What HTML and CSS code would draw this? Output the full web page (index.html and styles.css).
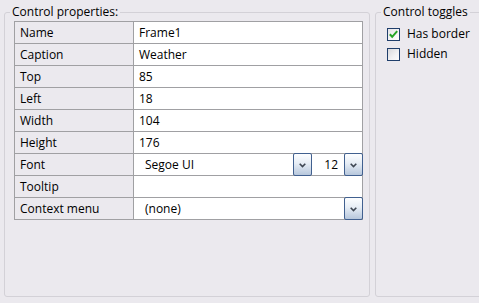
FILE: index.html
```html
<!DOCTYPE html>
<html>
<head>
<meta charset="utf-8">
<link rel="stylesheet" href="styles.css">
</head>
<body>
<div class="page">
  <fieldset class="group props">
    <legend>Control properties:</legend>
    <div class="inner props-inner">
      <div class="grid">
        <div class="row"><div class="key">Name</div><div class="val">Frame1</div></div>
        <div class="row"><div class="key">Caption</div><div class="val">Weather</div></div>
        <div class="row"><div class="key">Top</div><div class="val">85</div></div>
        <div class="row"><div class="key">Left</div><div class="val">18</div></div>
        <div class="row"><div class="key">Width</div><div class="val">104</div></div>
        <div class="row"><div class="key">Height</div><div class="val">176</div></div>
        <div class="row">
          <div class="key">Font</div>
          <div class="val combo-cell">
            <div class="combo grow"><span class="combo-text">Segoe UI</span><span class="drop"><svg width="7" height="5" viewBox="0 0 7 5"><path d="M0.7 0.7 L3.5 3.5 L6.3 0.7" fill="none" stroke="#3e4652" stroke-width="1.6"/></svg></span></div>
            <div class="combo size"><span class="combo-text right">12</span><span class="drop last"><svg width="7" height="5" viewBox="0 0 7 5"><path d="M0.7 0.7 L3.5 3.5 L6.3 0.7" fill="none" stroke="#3e4652" stroke-width="1.6"/></svg></span></div>
          </div>
        </div>
        <div class="row"><div class="key">Tooltip</div><div class="val"></div></div>
        <div class="row">
          <div class="key">Context menu</div>
          <div class="val combo-cell">
            <div class="combo grow"><span class="combo-text">(none)</span><span class="drop last"><svg width="7" height="5" viewBox="0 0 7 5"><path d="M0.7 0.7 L3.5 3.5 L6.3 0.7" fill="none" stroke="#3e4652" stroke-width="1.6"/></svg></span></div>
          </div>
        </div>
      </div>
    </div>
  </fieldset>
  <fieldset class="group toggles">
    <legend>Control toggles</legend>
    <div class="inner toggles-inner">
      <label class="check-row"><span class="box checked"><svg width="11" height="11" viewBox="0 0 11 11"><path d="M1.8 5.2 L4.2 7.8 L9.2 2.2" fill="none" stroke="#26a526" stroke-width="2"/></svg></span><span>Has border</span></label>
      <label class="check-row"><span class="box"></span><span>Hidden</span></label>
    </div>
  </fieldset>
</div>
</body>
</html>
```

FILE: styles.css
```css
html, body {
  margin: 0;
  padding: 0;
  background: #ebe9ee;
}

body {
  font-family: "Open Sans", "Noto Sans", sans-serif;
  font-size: 12px;
  color: #000;
  overflow: hidden;
}

.page {
  display: flex;
  gap: 5px;
  padding: 4px 0 0 4px;
  width: 479px;
  height: 303px;
  box-sizing: border-box;
  overflow: hidden;
}

.group {
  margin: 0;
  padding: 0;
  min-width: 0;
  border: 1px solid #d3d1d7;
  border-radius: 3px;
  box-sizing: border-box;
  height: 293px;
  flex: none;
}

.group legend {
  margin-left: 5px;
  padding: 0 2px;
  line-height: 16px;
  height: 16px;
}

.props {
  width: 366px;
}

.toggles {
  width: 130px;
}

.props-inner {
  padding: 1px 6px 0 9px;
}

.grid {
  width: 349px;
  box-sizing: border-box;
  border: 1px solid #a0a0a3;
  display: flex;
  flex-direction: column;
}

.row {
  display: flex;
  height: 22px;
  box-sizing: border-box;
  border-bottom: 1px solid #a0a0a3;
}

.row:last-child {
  border-bottom: none;
  height: 21px;
}

.key {
  width: 119px;
  flex: none;
  box-sizing: border-box;
  border-right: 1px solid #a0a0a3;
  padding-left: 5px;
  line-height: 21px;
}

.val {
  flex: 1;
  background: #fff;
  padding-left: 5px;
  line-height: 21px;
}

.combo-cell {
  padding-left: 0;
  display: flex;
}

.combo {
  display: flex;
  position: relative;
}

.combo.grow {
  flex: 1;
}

.combo.size {
  width: 50px;
  flex: none;
}

.combo-text {
  flex: 1;
  padding-left: 11px;
}

.combo-text.right {
  text-align: right;
  padding-left: 0;
  padding-right: 6px;
}

.drop {
  width: 19px;
  height: 23px;
  margin: -1px 0;
  box-sizing: border-box;
  border: 1px solid #41608f;
  border-radius: 2px;
  background: linear-gradient(#fdfeff 0%, #e6edf5 45%, #b7c7dc 100%);
  display: flex;
  align-items: center;
  justify-content: center;
  position: relative;
}

.drop.last {
  margin-right: -1px;
}

.drop svg {
  display: block;
  margin-top: 1px;
}

.toggles-inner {
  padding: 4px 0 0 11px;
  display: flex;
  flex-direction: column;
}

.check-row {
  display: flex;
  align-items: center;
  height: 20px;
  gap: 7px;
  line-height: 20px;
}

.box {
  width: 13px;
  height: 13px;
  box-sizing: border-box;
  border: 1px solid #1f3e6b;
  background: linear-gradient(135deg, #d9d9dc 0%, #f2f2f4 60%, #fbfbfc 100%);
  display: flex;
  align-items: center;
  justify-content: center;
  flex: none;
}

.box.checked {
  background: linear-gradient(135deg, #e4e4e7 0%, #f6f6f7 60%, #ffffff 100%);
}

.box svg {
  display: block;
}
```
